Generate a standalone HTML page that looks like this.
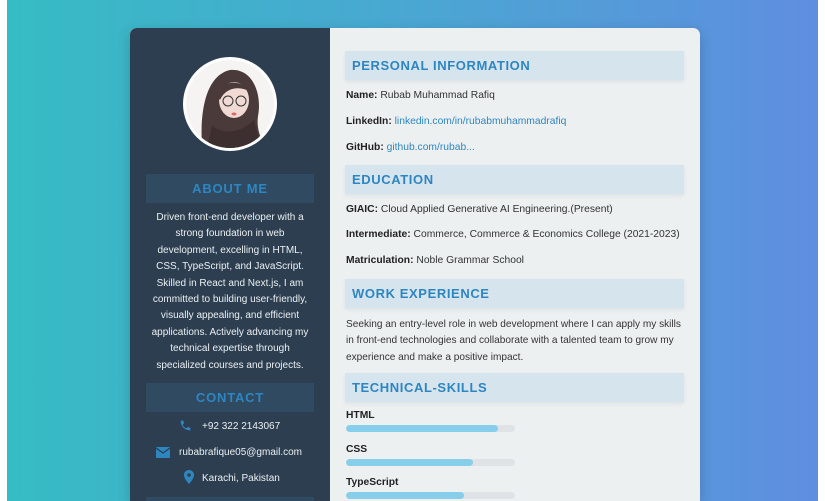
<!DOCTYPE html>
<html style="width:825px;height:501px;overflow:hidden"><head><meta charset="utf-8"><style>
*{margin:0;padding:0;box-sizing:border-box}
body{width:825px;height:501px;overflow:hidden;background:#fff;font-family:"Liberation Sans",sans-serif;position:relative}
.bg{position:absolute;left:7px;top:0;width:811px;height:501px;background:linear-gradient(90deg,#36bcc4,#4aa7d2 50%,#5f8ee0)}
.card{position:absolute;left:130px;top:28px;width:570px;height:473px;border-radius:7px 7px 0 0;overflow:hidden;background:#ecf0f1;box-shadow:0 4px 14px rgba(0,0,0,.18)}
.side{position:absolute;left:0;top:0;width:200px;height:100%;background:#2c3e50}
.a{position:absolute;white-space:nowrap}
.sh{position:absolute;left:16px;width:168px;height:29px;background:#304a62;color:#2e86c1;font-weight:bold;font-size:13px;letter-spacing:.8px;text-align:center;line-height:29px}
.st{color:#ecf0f1;font-size:10px;text-align:center;width:200px;left:0}
.mh{position:absolute;left:215px;width:339px;height:29px;background:#d6e4ee;color:#2e86c1;font-weight:bold;font-size:13px;letter-spacing:.6px;line-height:29px;padding-left:7px;box-shadow:0 2px 4px rgba(0,0,0,.06)}
.m{left:216px;font-size:10.3px;color:#333}
.m b{color:#222}
.lk{color:#2e86c1}
.bar{position:absolute;left:216px;width:169px;height:7px;border-radius:4px;background:#dfe3e6;overflow:hidden}
.bar i{display:block;height:100%;background:#87ceeb;border-radius:4px}
</style></head><body>
<div class="bg"></div>
<div class="card">
<div class="side">
<svg class="a" style="left:52px;top:28px" width="96" height="96" viewBox="0 0 96 96">
<circle cx="48" cy="48" r="47" fill="#fff"/>
<circle cx="48" cy="48" r="44" fill="#f6f3f3"/>
<clipPath id="c"><circle cx="48" cy="48" r="44"/></clipPath>
<g clip-path="url(#c)">
<path d="M20 90 C18 60 22 20 48 14 C72 12 80 40 76 60 C74 75 80 85 86 96 L14 96Z" fill="#4a3a3a"/>
<ellipse cx="52" cy="44" rx="15" ry="18" fill="#f1d9d4"/>
<path d="M34 40 C38 24 60 22 68 36 C60 30 44 30 38 44Z" fill="#4a3a3a"/>
<circle cx="46" cy="45" r="5" fill="none" stroke="#333" stroke-width="1"/>
<circle cx="59" cy="45" r="5" fill="none" stroke="#333" stroke-width="1"/>
<ellipse cx="52" cy="58" rx="2.5" ry="1.5" fill="#d66"/>
<path d="M30 70 C45 80 60 75 72 64 L80 96 L24 96Z" fill="#3d2f2f"/>
</g></svg>
<div class="sh" style="top:146px">ABOUT ME</div>
<div class="a st" style="top:182px;line-height:16.4px;white-space:normal">Driven front-end developer with a<br>strong foundation in web<br>development, excelling in HTML,<br>CSS, TypeScript, and JavaScript.<br>Skilled in React and Next.js, I am<br>committed to building user-friendly,<br>visually appealing, and efficient<br>applications. Actively advancing my<br>technical expertise through<br>specialized courses and projects.</div>
<div class="sh" style="top:355px">CONTACT</div>
<svg class="a" style="left:49px;top:391px" width="13" height="13" viewBox="0 0 24 24"><path fill="#2e86c1" d="M6.6 10.8c1.4 2.8 3.8 5.1 6.6 6.6l2.2-2.2c.3-.3.7-.4 1-.2 1.1.4 2.3.6 3.6.6.6 0 1 .4 1 1V20c0 .6-.4 1-1 1C10.6 21 3 13.4 3 4c0-.6.4-1 1-1h3.5c.6 0 1 .4 1 1 0 1.3.2 2.5.6 3.6.1.3 0 .7-.2 1z"/></svg>
<div class="a" style="left:72px;top:393px;font-size:10px;color:#ecf0f1">+92 322 2143067</div>
<svg class="a" style="left:26px;top:419px" width="14" height="11" viewBox="0 0 14 11"><rect width="14" height="11" rx="1" fill="#2e86c1"/><path d="M0 1l7 5 7-5" fill="none" stroke="#2c3e50" stroke-width="1.3"/></svg>
<div class="a" style="left:49px;top:419px;font-size:10px;color:#ecf0f1">rubabrafique05@gmail.com</div>
<svg class="a" style="left:54px;top:442px" width="10" height="14" viewBox="0 0 10 14"><path d="M5 0C2.2 0 0 2.2 0 5c0 3.8 5 9 5 9s5-5.2 5-9C10 2.2 7.8 0 5 0z" fill="#2e86c1"/><circle cx="5" cy="5" r="1.8" fill="#2c3e50"/></svg>
<div class="a" style="left:72px;top:445px;font-size:10px;color:#ecf0f1">Karachi, Pakistan</div>
<div class="sh" style="top:469px"></div>
</div>
<div class="mh" style="top:23px">PERSONAL INFORMATION</div>
<div class="a m" style="top:62px"><b>Name:</b> Rubab Muhammad Rafiq</div>
<div class="a m" style="top:88px"><b>LinkedIn:</b> <span class="lk">linkedin.com/in/rubabmuhammadrafiq</span></div>
<div class="a m" style="top:114px"><b>GitHub:</b> <span class="lk">github.com/rubab...</span></div>
<div class="mh" style="top:137px">EDUCATION</div>
<div class="a m" style="top:176px"><b>GIAIC:</b> Cloud Applied Generative AI Engineering.(Present)</div>
<div class="a m" style="top:201px"><b>Intermediate:</b> Commerce, Commerce &amp; Economics College (2021-2023)</div>
<div class="a m" style="top:227px"><b>Matriculation:</b> Noble Grammar School</div>
<div class="mh" style="top:251px">WORK EXPERIENCE</div>
<div class="a m" style="top:289px;line-height:16.3px;font-size:10.1px">Seeking an entry-level role in web development where I can apply my skills<br>in front-end technologies and collaborate with a talented team to grow my<br>experience and make a positive impact.</div>
<div class="mh" style="top:345px">TECHNICAL-SKILLS</div>
<div class="a m" style="top:382px"><b>HTML</b></div>
<div class="bar" style="top:397px"><i style="width:152px"></i></div>
<div class="a m" style="top:416px"><b>CSS</b></div>
<div class="bar" style="top:431px"><i style="width:127px"></i></div>
<div class="a m" style="top:449px"><b>TypeScript</b></div>
<div class="bar" style="top:464px"><i style="width:118px"></i></div>
</div>
</body></html>
